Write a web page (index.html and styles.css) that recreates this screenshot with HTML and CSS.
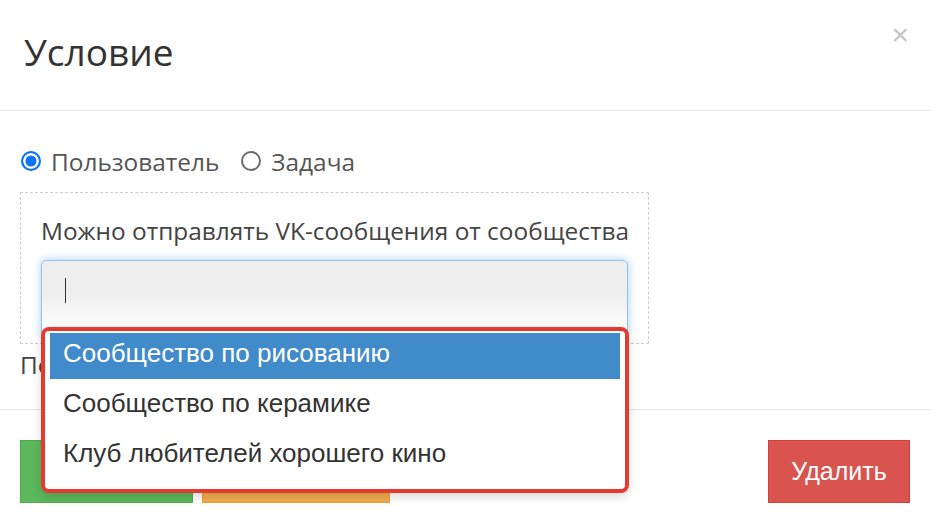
FILE: index.html
```html
<!DOCTYPE html>
<html lang="ru">
<head>
  <meta charset="UTF-8">
  <meta name="viewport" content="width=device-width, initial-scale=1.0">
  <title>Условие</title>
  <link rel="stylesheet" href="styles.css">
</head>
<body>
  <div class="modal">
    <!-- Header -->
    <div class="modal-header">
      <h4 class="modal-title">Условие</h4>
      <span class="close">&times;</span>
    </div>

    <!-- Body -->
    <div class="modal-body">
      <div class="radio-row">
        <label class="radio"><span class="radio-mark checked"></span>Пользователь</label>
        <label class="radio"><span class="radio-mark"></span>Задача</label>
      </div>

      <div class="condition-box">
        <div class="condition-label">Можно отправлять VK-сообщения от сообщества</div>
        <div class="select-input">
          <span class="caret"></span>
        </div>
      </div>

      <div class="hint">Пока условие не выбрано</div>
    </div>

    <!-- Footer -->
    <div class="modal-footer">
      <div class="left-buttons">
        <button class="btn btn-success">Сохранить</button>
        <button class="btn btn-warning">Отменить</button>
      </div>
      <button class="btn btn-danger">Удалить</button>
    </div>

    <!-- Dropdown list over the form -->
    <ul class="dropdown">
      <li class="active">Сообщество по рисованию</li>
      <li>Сообщество по керамике</li>
      <li>Клуб любителей хорошего кино</li>
    </ul>
  </div>
</body>
</html>
```

FILE: styles.css
```css
body {
  margin: 0;
  padding: 0;
  background-color: #ffffff;
  font-family: "Liberation Sans", Arial, sans-serif;
  color: #333333;
}

.modal {
  position: relative;
  width: 931px;
  height: 521px;
  overflow: hidden;
}

.modal-header {
  height: 111px;
  border-bottom: 1px solid #e5e5e5;
  padding: 0 24px;
  display: flex;
  justify-content: space-between;
  align-items: flex-start;
  box-sizing: border-box;
}

.modal-title {
  margin: 29px 0 0;
  font-family: "Open Sans", sans-serif;
  font-size: 37px;
  font-weight: normal;
  line-height: 46px;
  color: #333333;
}

.close {
  margin-top: 18px;
  margin-right: -2px;
  font-size: 30px;
  line-height: 34px;
  color: #c4c4c4;
}

.modal-body {
  padding: 37px 20px 0;
  height: 298px;
  box-sizing: border-box;
  font-family: "Open Sans", sans-serif;
  font-size: 24.4px;
  color: #555555;
}

.radio-row {
  display: flex;
  gap: 21px;
  height: 26px;
  align-items: center;
}

.radio {
  display: flex;
  align-items: center;
  gap: 10px;
}

.radio-mark {
  width: 20px;
  height: 20px;
  margin-left: 1px;
  border-radius: 50%;
  border: 2px solid #6b6b6b;
  box-sizing: border-box;
}

.radio-mark.checked {
  border-color: #0a74f5;
  background-color: #0a74f5;
  box-shadow: inset 0 0 0 2.5px #ffffff;
}

.condition-box {
  margin-top: 18px;
  width: 629px;
  height: 152px;
  border: 1px dashed #cccccc;
  box-sizing: border-box;
  padding: 22px 20px 0;
}

.condition-label {
  line-height: 32px;
  white-space: nowrap;
  color: #444444;
}

.select-input {
  margin-top: 13px;
  height: 76px;
  border: 1px solid #8fc3ee;
  border-radius: 5px;
  background: linear-gradient(#eeeeee 40%, #ffffff 100%);
  box-shadow: 0 0 8px rgba(102, 175, 233, 0.6);
  padding: 17px 23px;
  box-sizing: border-box;
}

.caret {
  display: block;
  width: 1px;
  height: 25px;
  background-color: #333333;
}

.hint {
  margin-top: 5px;
  line-height: 32px;
  color: #444444;
}

.modal-footer {
  border-top: 1px solid #e5e5e5;
  padding: 30px 20px 0 20px;
  display: flex;
  justify-content: space-between;
}

.left-buttons {
  display: flex;
  gap: 9px;
}

.btn {
  height: 63px;
  border: 1px solid transparent;
  font-family: "Liberation Sans", Arial, sans-serif;
  font-size: 25px;
  color: #ffffff;
  padding: 0 20px;
}

.btn-success {
  width: 173px;
  background-color: #5cb85c;
  border-color: #4cae4c;
}

.btn-warning {
  width: 188px;
  background-color: #f0ad4e;
  border-color: #eea236;
}

.btn-danger {
  width: 142px;
  margin-right: 1px;
  background-color: #d9534f;
  border-color: #d43f3a;
}

.dropdown {
  position: absolute;
  left: 41px;
  top: 327px;
  width: 588px;
  height: 166px;
  margin: 0;
  padding: 2px 5px;
  list-style: none;
  box-sizing: border-box;
  border: 4px solid #e53a2f;
  border-radius: 8px;
  background-color: #ffffff;
  box-shadow: 0 4px 10px rgba(0, 0, 0, 0.15);
  font-size: 26px;
  color: #333333;
  overflow: hidden;
}

.dropdown li {
  height: 50px;
  line-height: 40px;
  padding-left: 13px;
}

.dropdown li.active {
  height: 46px;
  background-color: #428bca;
  color: #ffffff;
  line-height: 40px;
  margin-bottom: 4px;
}
```
